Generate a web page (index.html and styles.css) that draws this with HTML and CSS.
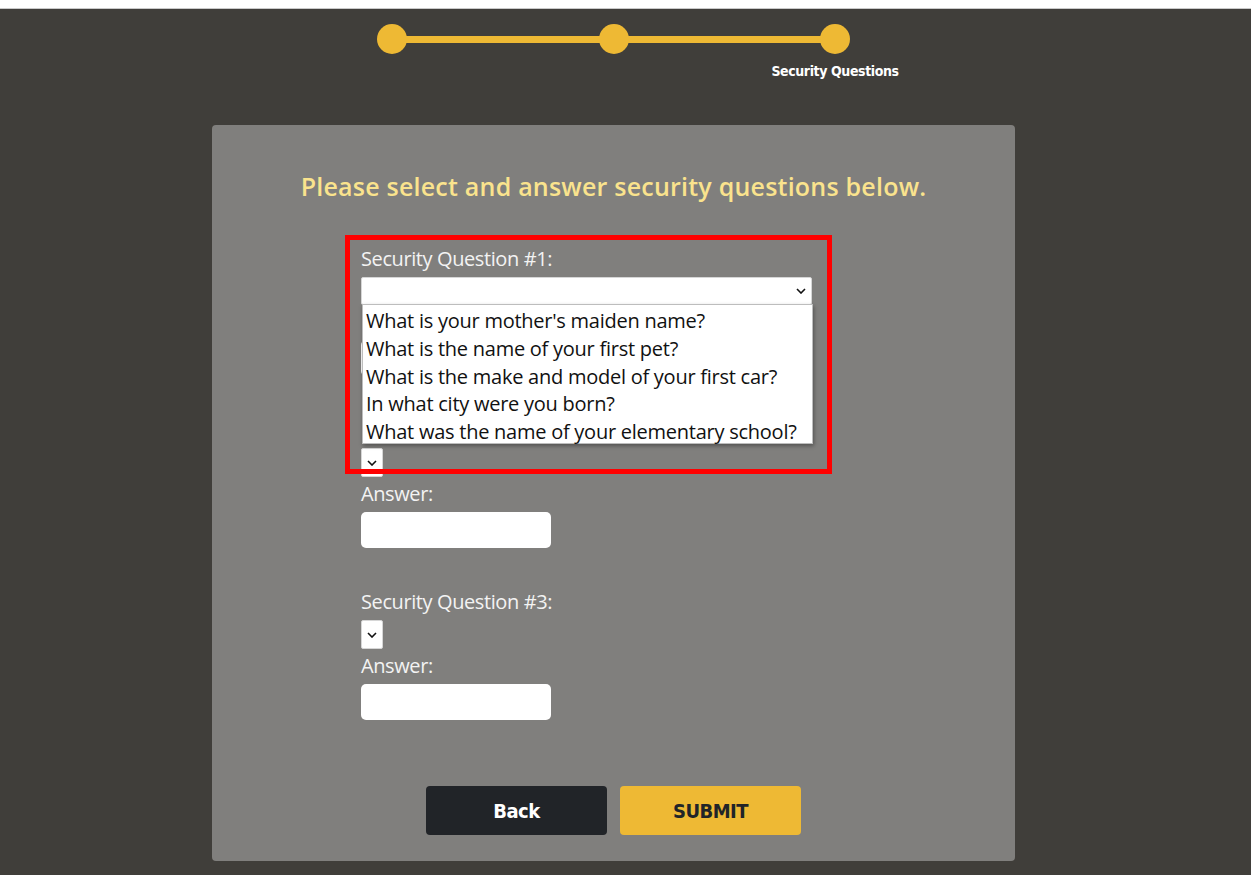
FILE: index.html
```html
<!DOCTYPE html>
<html lang="en">
<head>
<meta charset="utf-8">
<title>Security Questions</title>
<link rel="stylesheet" href="styles.css">
</head>
<body>
<div class="topstrip"></div>
<div class="page">
  <div class="stepper">
    <div class="track"></div>
    <div class="step"><span class="dot"></span></div>
    <div class="step"><span class="dot"></span></div>
    <div class="step"><span class="dot"></span><span class="step-label">Security Questions</span></div>
  </div>

  <div class="card">
    <h1 class="title">Please select and answer security questions below.</h1>

    <form class="form">
      <div class="group">
        <label class="label">Security Question #1:</label>
        <div class="select select-wide"><svg class="chev" viewBox="0 0 10 6" width="10" height="6"><path d="M1 1l4 4 4-4" fill="none" stroke="#111" stroke-width="1.6"/></svg></div>
        <label class="label covered">Answer:</label>
        <div class="input"></div>
      </div>
      <div class="group">
        <label class="label covered">Security Question #2:</label>
        <div class="select"><svg class="chev" viewBox="0 0 10 6" width="10" height="6"><path d="M1 1l4 4 4-4" fill="none" stroke="#111" stroke-width="1.6"/></svg></div>
        <label class="label">Answer:</label>
        <div class="input"></div>
      </div>
      <div class="group">
        <label class="label">Security Question #3:</label>
        <div class="select"><svg class="chev" viewBox="0 0 10 6" width="10" height="6"><path d="M1 1l4 4 4-4" fill="none" stroke="#111" stroke-width="1.6"/></svg></div>
        <label class="label">Answer:</label>
        <div class="input"></div>
      </div>

      <ul class="options">
        <li>What is your mother's maiden name?</li>
        <li>What is the name of your first pet?</li>
        <li>What is the make and model of your first car?</li>
        <li>In what city were you born?</li>
        <li>What was the name of your elementary school?</li>
      </ul>
      <div class="highlight"></div>
    </form>

    <div class="buttons">
      <button class="btn btn-back" type="button">Back</button>
      <button class="btn btn-submit" type="button">SUBMIT</button>
    </div>
  </div>
</div>
</body>
</html>
```

FILE: styles.css
```css
* { box-sizing: border-box; }
html, body { margin: 0; padding: 0; }
body {
  background: #403e3a;
  font-family: "Open Sans", "Noto Sans", sans-serif;
  height: 875px;
  overflow: hidden;
}
.topstrip {
  height: 9px;
  background: #ffffff;
  border-bottom: 1px solid #c9c9c9;
}
.page {
  padding-right: 24px;
  display: flex;
  flex-direction: column;
  align-items: center;
}
.stepper {
  position: relative;
  width: 473px;
  margin-top: 15px;
  height: 101px;
  display: flex;
  justify-content: space-between;
}
.track {
  position: absolute;
  left: 15px;
  right: 15px;
  top: 12px;
  height: 7px;
  background: #eeb934;
}
.step {
  position: relative;
  width: 30px;
  display: flex;
  flex-direction: column;
  align-items: center;
}
.dot {
  width: 30px;
  height: 30px;
  border-radius: 50%;
  background: #eeb934;
  position: relative;
}
.step-label {
  margin-top: 9px;
  white-space: nowrap;
  color: #ffffff;
  font-family: "DejaVu Sans Condensed", "DejaVu Sans", sans-serif;
  font-weight: bold;
  font-size: 14px;
  letter-spacing: -0.4px;
}
.card {
  width: 803px;
  height: 736px;
  background: #807f7d;
  border-radius: 4px;
  padding-top: 44px;
}
.title {
  margin: 0;
  text-align: center;
  color: #fae38d;
  font-size: 25px;
  font-weight: 600;
  line-height: 34px;
  letter-spacing: 0.22px;
}
.form {
  position: relative;
  margin: 43px 0 0 149px;
  width: 470px;
}
.group {
  display: flex;
  flex-direction: column;
  align-items: flex-start;
  margin-bottom: 41px;
}
.group:last-child { margin-bottom: 0; }
.label {
  color: #f3f3f3;
  font-size: 20px;
  line-height: 26px;
  letter-spacing: -0.4px;
}
.covered { visibility: hidden; }
.select {
  width: 22px;
  height: 29px;
  background: #ffffff;
  border: 1px solid #d6d6d6;
  border-radius: 2px;
  margin: 5px 0 4px;
  display: flex;
  align-items: center;
  justify-content: flex-end;
  padding-right: 5px;
}
.select-wide { width: 451px; height: 28px; padding-right: 5px; }
.chev { display: block; }
.input {
  width: 190px;
  height: 36px;
  background: #ffffff;
  border-radius: 5px;
  margin-top: 5px;
}
.options {
  position: absolute;
  left: 1px;
  top: 58px;
  width: 451px;
  height: 140px;
  margin: 0;
  padding: 2px 0 0 3px;
  list-style: none;
  background: #ffffff;
  border: 1px solid #bdbdbd;
  box-shadow: 1px 2px 4px rgba(0,0,0,0.35);
}
.options li {
  font-size: 20px;
  line-height: 27.8px;
  color: #111111;
  white-space: nowrap;
  letter-spacing: -0.25px;
}
.highlight {
  position: absolute;
  left: -16px;
  top: -11px;
  width: 487px;
  height: 239px;
  border: 5px solid #ff0000;
  pointer-events: none;
}
.buttons {
  display: flex;
  justify-content: center;
  gap: 13px;
  margin-top: 66px;
}
.btn {
  width: 181px;
  height: 49px;
  border: none;
  border-radius: 4px;
  font-family: "DejaVu Sans Condensed", "DejaVu Sans", sans-serif;
  font-weight: bold;
  font-size: 20px;
  letter-spacing: -0.5px;
  padding: 0;
}
.btn-back { background: #212428; color: #ffffff; }
.btn-submit { background: #eeb934; color: #212428; }
```
